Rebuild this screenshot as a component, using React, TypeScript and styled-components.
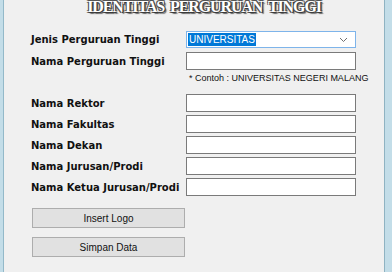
import styled, { createGlobalStyle } from "styled-components";

const GlobalStyle = createGlobalStyle`
  html, body {
    margin: 0;
    padding: 0;
    background: #f0f0f0;
    overflow: hidden;
  }
`;

const fields = [
  "Nama Rektor",
  "Nama Fakultas",
  "Nama Dekan",
  "Nama Jurusan/Prodi",
  "Nama Ketua Jurusan/Prodi",
];

const App = () => {
  return (
    <>
      <GlobalStyle />
      <Frame>
        <Panel>
          <Title>IDENTITAS PERGURUAN TINGGI</Title>
          <Form>
            <Label>Jenis Perguruan Tinggi</Label>
            <Combo>
              <Selected>UNIVERSITAS</Selected>
              <svg width="9" height="6" viewBox="0 0 9 6">
                <path d="M1 1 L4.5 4.5 L8 1" fill="none" stroke="#707070" strokeWidth="1" />
              </svg>
            </Combo>
            <Label>Nama Perguruan Tinggi</Label>
            <Input />
            <span />
            <Hint>* Contoh : UNIVERSITAS NEGERI MALANG</Hint>
          </Form>
          <FieldList>
            {fields.map((f) => (
              <Row key={f}>
                <Label>{f}</Label>
                <Input />
              </Row>
            ))}
          </FieldList>
          <Buttons>
            <Button>Insert Logo</Button>
            <Button>Simpan Data</Button>
          </Buttons>
        </Panel>
      </Frame>
    </>
  );
};

const Frame = styled.div`
  width: 392px;
  height: 272px;
  box-sizing: border-box;
  padding: 0 7px 0 3px;
  background: #c3dde8;
  display: flex;
`;

const Panel = styled.div`
  flex: 1;
  background: #f0f0f0;
  border-left: 1px solid #93b9c9;
  border-right: 1px solid #8fb3c2;
  overflow: hidden;
`;

const Title = styled.div`
  margin-top: 0;
  height: 14px;
  padding-left: 20px;
  text-align: center;
  font-family: "Liberation Serif", serif;
  font-weight: bold;
  font-size: 16px;
  line-height: 14px;
  letter-spacing: -1.1px;
  word-spacing: 3px;
  color: #ffffff;
  text-shadow: 1px 1px 0 #3a3a3a, -1px -1px 0 #555, 1px -1px 0 #555,
    -1px 1px 0 #555, 2px 2px 1px #666;
`;

const Form = styled.div`
  display: grid;
  grid-template-columns: 155px 170px;
  grid-template-rows: 17px 18px 11px;
  row-gap: 4px;
  padding: 17px 0 0 27px;
  align-items: center;
`;

const Label = styled.div`
  font-family: "DejaVu Sans", sans-serif;
  font-weight: bold;
  font-size: 10px;
  color: #111;
  white-space: nowrap;
`;

const Combo = styled.div`
  height: 17px;
  box-sizing: border-box;
  border: 1px solid #7eb4ea;
  background: #ffffff;
  display: flex;
  align-items: center;
  justify-content: space-between;
  padding: 0 7px 0 1px;
`;

const Selected = styled.span`
  background: #0078d7;
  color: #ffffff;
  font-family: "Liberation Sans", sans-serif;
  font-size: 10px;
  line-height: 13px;
  padding: 0 1px;
`;

const Input = styled.div`
  height: 18px;
  box-sizing: border-box;
  border: 1px solid #7a7a7a;
  background: #ffffff;
`;

const Hint = styled.div`
  font-family: "Liberation Sans", sans-serif;
  font-size: 9px;
  color: #111;
  padding-left: 3px;
  margin-top: -3px;
  white-space: nowrap;
`;

const FieldList = styled.div`
  display: flex;
  flex-direction: column;
  gap: 3px;
  padding: 9px 0 0 27px;
`;

const Row = styled.div`
  display: grid;
  grid-template-columns: 155px 170px;
  align-items: center;
`;

const Buttons = styled.div`
  display: flex;
  flex-direction: column;
  gap: 9px;
  padding: 12px 0 0 28px;
`;

const Button = styled.button`
  width: 153px;
  height: 20px;
  box-sizing: border-box;
  border: 1px solid #adadad;
  background: #e1e1e1;
  font-family: "Liberation Sans", sans-serif;
  font-size: 10px;
  color: #111;
  padding: 0;
`;

export default App;
